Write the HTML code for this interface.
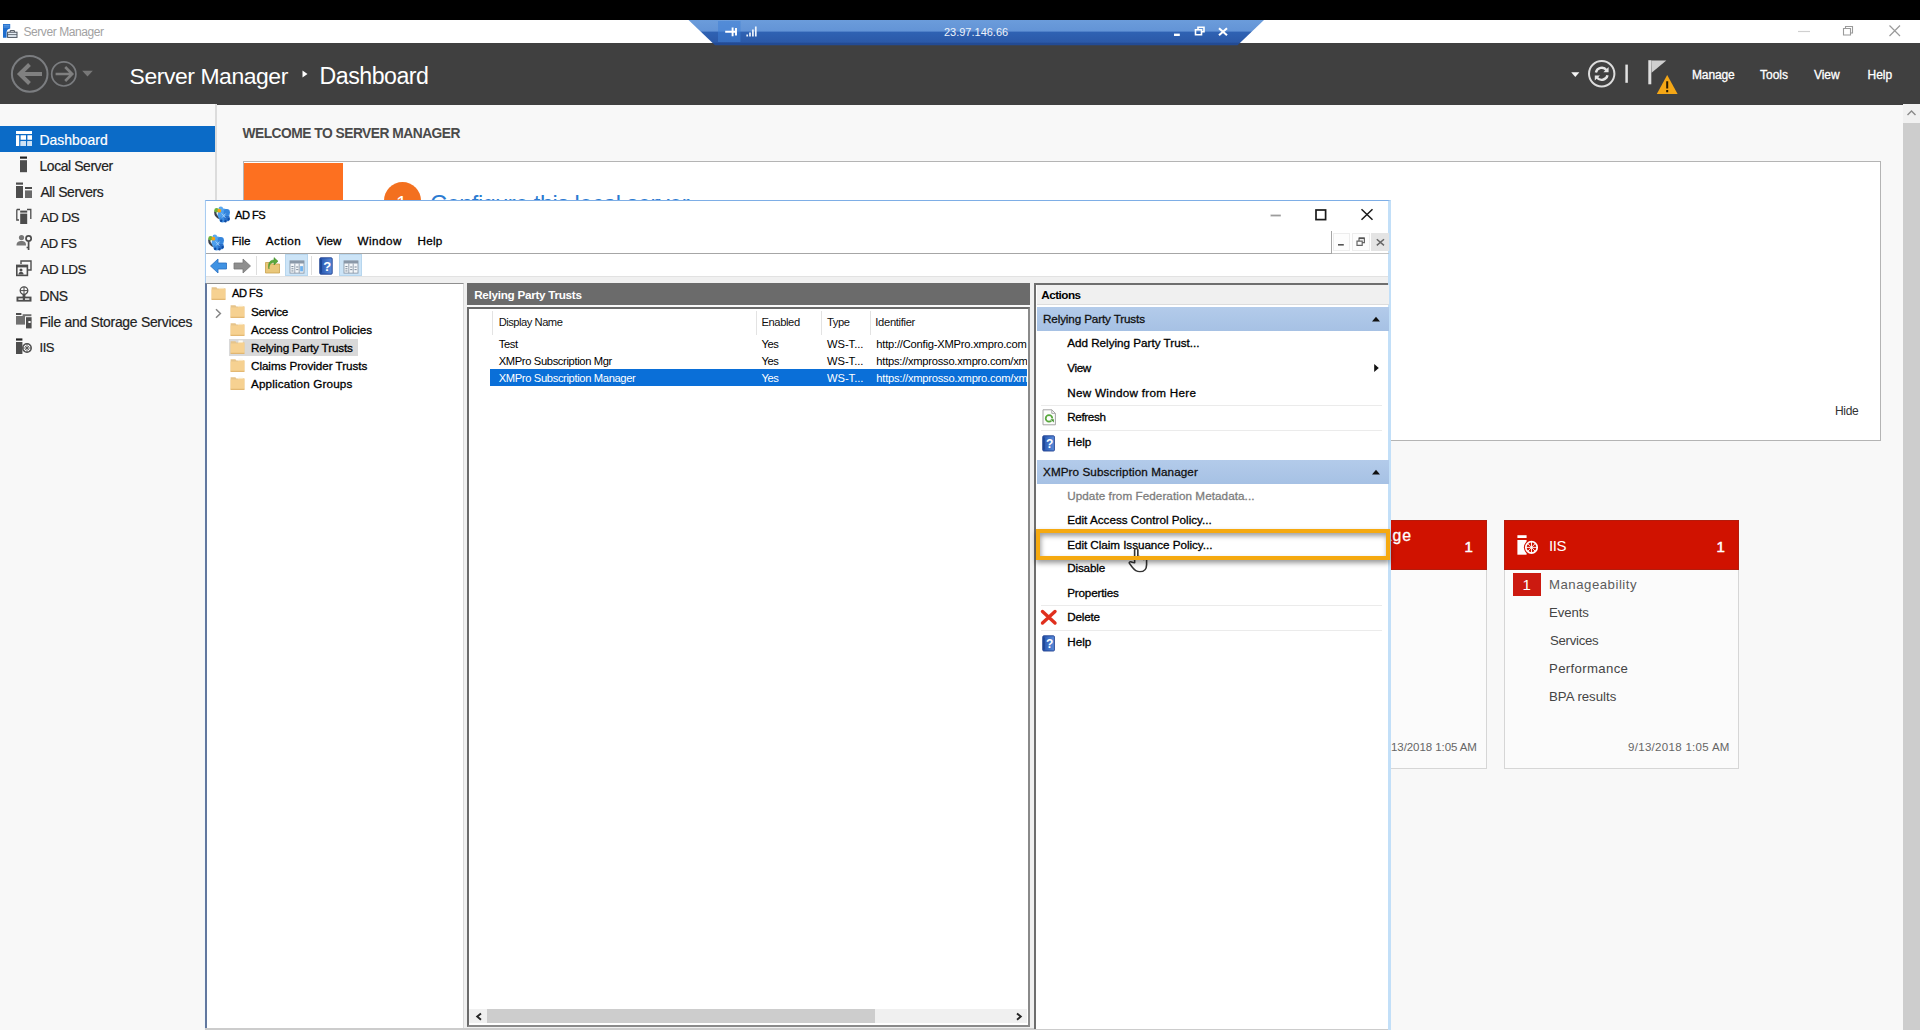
<!DOCTYPE html>
<html lang="en"><head><meta charset="utf-8"><title>Server Manager</title>
<style>
html,body{margin:0;padding:0;}
body{width:1920px;height:1030px;overflow:hidden;background:#f8f8f8;font-family:"Liberation Sans",sans-serif;}
#root{position:relative;width:1920px;height:1030px;overflow:hidden;}
#root div,#root span,#root svg{position:absolute;}
#root span{white-space:pre;line-height:20px;height:20px;}
</style></head><body><div id="root">
<div style="left:0px;top:0px;width:1920px;height:20px;background:#000;"></div>
<div style="left:0px;top:19.8px;width:1920px;height:23px;background:#fff;"></div>
<svg style="left:2.5px;top:24px;" width="15" height="14" viewBox="0 0 15 14"><path d="M0 0H7.2V4.4C5 4.8 3.6 6.2 3.6 8.2V13.7H0Z" fill="#1f6dcd"/><path d="M0.6 1.3H6.6M0.6 3H6.6" stroke="#7db2ee" stroke-width="0.7"/>
<rect x="4.6" y="8.2" width="9.4" height="5.2" fill="#e6edf5" stroke="#4d5560" stroke-width="1"/><path d="M7.2 8V6.6H11.4V8" stroke="#4d5560" stroke-width="1" fill="none"/><path d="M4.6 10.6H14" stroke="#4d5560" stroke-width="0.8"/></svg>
<span style="left:23.40px;top:21.74px;font-size:12px;color:#a2a2a2;letter-spacing:-0.419px;">Server Manager</span>
<svg style="left:1796px;top:24px;" width="16" height="14" viewBox="0 0 16 14"><path d="M2 7.5H14" stroke="#d0d0d0" stroke-width="1.2"/></svg>
<svg style="left:1839px;top:21.5px;" width="16" height="16" viewBox="0 0 16 16"><path d="M4.5 6.5H11.5V13H4.5Z M6.5 6.5V4.5H13.5V11H11.5" fill="none" stroke="#9a9a9a" stroke-width="1.1"/></svg>
<svg style="left:1887px;top:23px;" width="16" height="16" viewBox="0 0 16 16"><path d="M2.5 2.5L13 13M13 2.5L2.5 13" stroke="#9a9a9a" stroke-width="1.2" fill="none"/></svg>
<div style="left:0px;top:42.5px;width:1920px;height:62px;background:#404040;"></div>
<svg style="left:686px;top:19.8px;" width="580" height="26" viewBox="0 0 580 26"><defs><linearGradient id="rg" x1="0" y1="0" x2="0" y2="1"><stop offset="0" stop-color="#6b9cdb"/><stop offset="0.44" stop-color="#6394d6"/><stop offset="0.48" stop-color="#2f62b3"/><stop offset="0.88" stop-color="#2b59a8"/><stop offset="0.92" stop-color="#234b94"/><stop offset="1" stop-color="#234b94"/></linearGradient></defs>
<polygon points="2.5,0 578,0 551.5,25.2 29,25.2" fill="url(#rg)"/>
<rect x="32" y="1" width="22.5" height="21" fill="#3f7fd6" opacity="0.55"/>
<path d="M39.2 11.8H50.6M46.6 7.4V16.2M50 8V15.6" stroke="#fff" stroke-width="1.9" fill="none"/>
<path d="M61.2 16.4V14.4M64 16.4V12.4M66.9 16.4V9.6M69.8 16.4V6.6" stroke="#edf3fc" stroke-width="1.7" fill="none"/>
<path d="M488 14.8H493.8" stroke="#fff" stroke-width="2.4"/>
<path d="M509.5 9.8H515.5V14.8H509.5Z M512 9.4V7.2H518V11.8H516" fill="none" stroke="#fff" stroke-width="1.6"/>
<path d="M533 8.2L541 15.2M541 8.2L533 15.2" stroke="#fff" stroke-width="2.1" fill="none"/></svg>
<span style="left:944.00px;top:22.19px;font-size:11px;color:#eef3fb;letter-spacing:-0.010px;">23.97.146.66</span>
<svg style="left:8px;top:53px;" width="90" height="42" viewBox="0 0 90 42"><circle cx="21.7" cy="20.9" r="17.8" fill="none" stroke="#7b7d80" stroke-width="2"/>
<path d="M34 21H13M21.5 11.5L11.8 21L21.5 30.5" fill="none" stroke="#808080" stroke-width="4"/>
<circle cx="55.8" cy="20.9" r="12.1" fill="none" stroke="#7b7d80" stroke-width="1.7"/>
<path d="M47.6 21H63M57.2 14L64.2 21L57.2 28" fill="none" stroke="#808080" stroke-width="2.6"/>
<path d="M74.2 17.8H84.8L79.5 23.6Z" fill="#787878"/></svg>
<span style="left:129.52px;top:65.85px;font-size:22.93px;color:#fff;letter-spacing:-0.429px;">Server Manager</span>
<svg style="left:300px;top:68px;" width="10" height="12" viewBox="0 0 10 12"><path d="M2.5 2.5L7.5 6L2.5 9.5Z" fill="#fff"/></svg>
<span style="left:319.51px;top:65.77px;font-size:23.17px;color:#fff;letter-spacing:-0.475px;">Dashboard</span>
<svg style="left:1568px;top:58px;" width="112" height="38" viewBox="0 0 112 38"><path d="M3.2 14.2H11.4L7.3 19Z" fill="#f4f4f4"/>
<circle cx="33.7" cy="15.8" r="12.7" fill="none" stroke="#dcdcdc" stroke-width="2"/>
<path d="M27.9 14.4A6 6 0 0 1 38.6 12.2M39.5 17.2A6 6 0 0 1 28.8 19.4" fill="none" stroke="#e4e4e4" stroke-width="2.4"/>
<path d="M40.6 9V14.2H35.4Z M26.8 22.6V17.4H32Z" fill="#e4e4e4"/>
<path d="M58.6 6.6V24.8" stroke="#e2e2e2" stroke-width="2.5"/>
<path d="M81.8 2.2V26.3" stroke="#dedede" stroke-width="3"/>
<path d="M83.3 2.4H98.3L83.6 14.8Z" fill="#cfcfcf"/>
<path d="M99.2 17L109.6 36H88.8Z" fill="#f5a716"/>
<path d="M99.2 23.2V30.4M99.2 32V34.2" stroke="#2a1a00" stroke-width="2"/></svg>
<span style="left:1692.00px;top:64.54px;font-size:12px;color:#fff;letter-spacing:-0.138px;-webkit-text-stroke:0.3px currentColor;">Manage</span>
<span style="left:1760.00px;top:64.54px;font-size:12px;color:#fff;-webkit-text-stroke:0.3px currentColor;">Tools</span>
<span style="left:1814.00px;top:64.54px;font-size:12px;color:#fff;letter-spacing:-0.042px;-webkit-text-stroke:0.3px currentColor;">View</span>
<span style="left:1867.50px;top:64.54px;font-size:12px;color:#fff;-webkit-text-stroke:0.3px currentColor;">Help</span>
<div style="left:0px;top:104px;width:215px;height:926px;background:#f8f8f8;"></div>
<div style="left:215px;top:104px;width:2px;height:926px;background:#dcdcdc;"></div>
<div style="left:0px;top:126px;width:215px;height:26px;background:#0b6bc7;"></div>
<span style="left:39.50px;top:129.68px;font-size:13.9px;color:#fff;letter-spacing:0.034px;-webkit-text-stroke:0.2px currentColor;">Dashboard</span>
<span style="left:39.50px;top:155.68px;font-size:13.9px;color:#222;letter-spacing:-0.396px;-webkit-text-stroke:0.2px currentColor;">Local Server</span>
<span style="left:40.50px;top:181.68px;font-size:13.9px;color:#222;letter-spacing:-0.391px;-webkit-text-stroke:0.2px currentColor;">All Servers</span>
<span style="left:40.50px;top:207.83px;font-size:13.48px;color:#222;letter-spacing:-0.505px;-webkit-text-stroke:0.2px currentColor;">AD DS</span>
<span style="left:40.50px;top:233.97px;font-size:13.07px;color:#222;letter-spacing:-0.501px;-webkit-text-stroke:0.2px currentColor;">AD FS</span>
<span style="left:40.50px;top:259.83px;font-size:13.48px;color:#222;letter-spacing:-0.543px;-webkit-text-stroke:0.2px currentColor;">AD LDS</span>
<span style="left:39.50px;top:285.68px;font-size:13.9px;color:#222;letter-spacing:-0.381px;-webkit-text-stroke:0.2px currentColor;">DNS</span>
<span style="left:39.50px;top:311.68px;font-size:13.9px;color:#222;letter-spacing:-0.259px;-webkit-text-stroke:0.2px currentColor;">File and Storage Services</span>
<span style="left:39.56px;top:337.97px;font-size:13.07px;color:#222;letter-spacing:-0.488px;-webkit-text-stroke:0.2px currentColor;">IIS</span>
<svg style="left:16px;top:131px;" width="16" height="16" viewBox="0 0 16 16"><path d="M0 0H16V3H0Z M0 4.2H3.2V15H0Z M4.6 4.2H10V8.8H4.6Z M11.4 4.2H16V8.8H11.4Z M4.6 10.2H10V15H4.6Z M11.4 10.2H16V15H11.4Z" fill="#fff"/><path d="M4.6 10.2H10V15H4.6Z M11.4 10.2H16V15H11.4Z" fill="#cfe2f5"/></svg>
<svg style="left:16px;top:156px;" width="16" height="17" viewBox="0 0 16 17"><rect x="4" y="0.5" width="7" height="2.2" fill="#222"/><rect x="4" y="4.2" width="7" height="12" fill="#4d4d4d"/></svg>
<svg style="left:16px;top:182px;" width="16" height="17" viewBox="0 0 16 17"><rect x="0" y="0.5" width="7" height="2.2" fill="#4d4d4d"/><rect x="0" y="4" width="7" height="12" fill="#4d4d4d"/><rect x="9" y="5" width="7" height="2" fill="#4d4d4d"/><rect x="9" y="8.4" width="7" height="7.6" fill="#6a6a6a"/></svg>
<svg style="left:16px;top:208px;" width="16" height="17" viewBox="0 0 16 17"><path d="M0.8 1.5H4M11 1.5H14.8V11M0.8 1.5V12H3" fill="none" stroke="#4d4d4d" stroke-width="1.3"/><rect x="4.2" y="2.6" width="7" height="2" fill="#4d4d4d"/><rect x="4.2" y="5.6" width="7" height="10.4" fill="#4d4d4d"/></svg>
<svg style="left:16px;top:234px;" width="17" height="17" viewBox="0 0 17 17"><circle cx="5.5" cy="3.6" r="2.6" fill="#777"/><path d="M0.5 11.5C0.5 8 2.5 7 5.5 7S10 8 10 11.5Z" fill="#777"/><circle cx="12.6" cy="4.4" r="2.6" fill="none" stroke="#4d4d4d" stroke-width="1.7"/><path d="M12.6 7V16M12.6 13.5H10.6" stroke="#4d4d4d" stroke-width="1.7" fill="none"/></svg>
<svg style="left:16px;top:260px;" width="16" height="17" viewBox="0 0 16 17"><path d="M5 4V1H15V10H12" fill="none" stroke="#4d4d4d" stroke-width="1.4"/><rect x="0.8" y="5.4" width="10.6" height="10" fill="none" stroke="#4d4d4d" stroke-width="1.6"/><rect x="0.8" y="5" width="10.6" height="2.4" fill="#4d4d4d"/><circle cx="5" cy="10" r="1.5" fill="#4d4d4d"/><path d="M2.5 14.6C2.5 12.4 3.6 12 5 12S7.6 12.4 7.6 14.6Z" fill="#4d4d4d"/></svg>
<svg style="left:16px;top:286px;" width="16" height="17" viewBox="0 0 16 17"><circle cx="8" cy="4.6" r="3.8" fill="none" stroke="#4d4d4d" stroke-width="1.3"/><path d="M4.2 4.6H11.8M8 0.8V8.4" stroke="#4d4d4d" stroke-width="1"/><rect x="6.6" y="8" width="2.8" height="3" fill="#4d4d4d"/><rect x="0.5" y="10.6" width="15" height="5" fill="#4d4d4d"/><rect x="2.4" y="12.4" width="4.4" height="1.4" fill="#f8f8f8"/><rect x="9" y="12.4" width="4.4" height="1.4" fill="#f8f8f8"/></svg>
<svg style="left:16px;top:312px;" width="16" height="17" viewBox="0 0 16 17"><path d="M0 1H5.4V3H0Z" fill="#4d4d4d"/><path d="M0 4H9V12.6H0Z" fill="#707070"/><path d="M6.6 2.2H15.4V4.2H6.6Z" fill="#707070"/><path d="M10 5.2H15.6V16.4H10Z" fill="#4d4d4d"/><rect x="12.4" y="9" width="2.2" height="2" fill="#f8f8f8"/></svg>
<svg style="left:16px;top:338px;" width="16" height="17" viewBox="0 0 16 17"><rect x="0" y="0.4" width="6.4" height="2.2" fill="#222"/><rect x="0" y="4" width="6.4" height="12" fill="#4d4d4d"/><circle cx="11" cy="10" r="4.2" fill="none" stroke="#4d4d4d" stroke-width="1.5"/><path d="M7 10H15M11 6V14M8.4 7.4L13.6 12.6M13.6 7.4L8.4 12.6" stroke="#4d4d4d" stroke-width="0.8"/></svg>
<svg style="left:202.5px;top:316px;" width="8" height="10" viewBox="0 0 8 10"><path d="M2 0.5L6.5 5L2 9.5Z" fill="#222"/></svg>
<span style="left:242.50px;top:123.62px;font-size:13.8px;color:#4a4a4a;font-weight:700;letter-spacing:-0.511px;">WELCOME TO SERVER MANAGER</span>
<div style="left:243px;top:161px;width:1638px;height:279.5px;background:#fff;border:1px solid #b4b4b4;box-sizing:border-box;"></div>
<div style="left:243.8px;top:163.2px;width:99.2px;height:121px;background:#fd7020;"></div>
<div style="left:383.5px;top:181.5px;width:37px;height:37px;background:#f3701f;border-radius:50%;"></div>
<span style="left:396.00px;top:193.07px;font-size:20px;color:#fff;">1</span>
<span style="left:430.09px;top:193.80px;font-size:23.66px;color:#2b7bd1;letter-spacing:-0.536px;">Configure this local server</span>
<span style="left:1835.00px;top:401.34px;font-size:12px;color:#333;letter-spacing:-0.335px;">Hide</span>
<div style="left:1903px;top:104px;width:17px;height:926px;background:#f1f1f1;"></div>
<div style="left:1903px;top:122.5px;width:17px;height:908px;background:#cdcdcd;"></div>
<svg style="left:1905px;top:108px;" width="13" height="10" viewBox="0 0 13 10"><path d="M2.5 7L6.5 3L10.5 7" fill="none" stroke="#8a8a8a" stroke-width="1.4"/></svg>
<div style="left:1252px;top:520px;width:234.5px;height:249px;background:#fbfbfb;border:1px solid #d6d6d6;box-sizing:border-box;"></div>
<div style="left:1252px;top:520px;width:234.5px;height:49.5px;background:#d01200;border:1px solid #b41c0c;box-sizing:border-box;"></div>
<div style="left:1504px;top:520px;width:234.5px;height:249px;background:#fbfbfb;border:1px solid #d6d6d6;box-sizing:border-box;"></div>
<div style="left:1504px;top:520px;width:234.5px;height:49.5px;background:#d01200;border:1px solid #b41c0c;box-sizing:border-box;"></div>
<span style="left:1382.60px;top:525.53px;font-size:15.8px;color:#fff;letter-spacing:1.065px;-webkit-text-stroke:0.3px currentColor;">age</span>
<span style="left:1464.40px;top:536.60px;font-size:15px;color:#fff;-webkit-text-stroke:0.5px currentColor;">1</span>
<span style="left:1391.00px;top:737.02px;font-size:11.5px;color:#666;letter-spacing:-0.072px;">13/2018 1:05 AM</span>
<svg style="left:1517px;top:535px;" width="24" height="22" viewBox="0 0 24 22"><rect x="0.4" y="0.2" width="9.2" height="2.8" fill="#fff"/><rect x="0.4" y="5" width="9.2" height="14.7" fill="#fff"/><circle cx="14.5" cy="12.4" r="7.6" fill="#d01200"/><circle cx="14.5" cy="12.4" r="5.7" fill="none" stroke="#fff" stroke-width="1.7"/><path d="M9 12.4H20M14.5 7V18M10.8 8.6L18.2 16.2M18.2 8.6L10.8 16.2" stroke="#fff" stroke-width="0.9"/></svg>
<span style="left:1549.00px;top:536.30px;font-size:15px;color:#fff;letter-spacing:-0.417px;">IIS</span>
<span style="left:1716.40px;top:536.60px;font-size:15px;color:#fff;-webkit-text-stroke:0.5px currentColor;">1</span>
<div style="left:1513px;top:573px;width:27.5px;height:23px;background:#cc1a10;"></div>
<span style="left:1522.60px;top:574.80px;font-size:15px;color:#fff;">1</span>
<span style="left:1549.00px;top:574.73px;font-size:13.2px;color:#5c5c5c;letter-spacing:0.518px;">Manageability</span>
<span style="left:1549.00px;top:602.73px;font-size:13.2px;color:#444;letter-spacing:-0.104px;">Events</span>
<span style="left:1550.00px;top:630.73px;font-size:13.2px;color:#444;letter-spacing:-0.282px;">Services</span>
<span style="left:1549.00px;top:658.73px;font-size:13.2px;color:#444;letter-spacing:0.344px;">Performance</span>
<span style="left:1549.00px;top:686.73px;font-size:13.2px;color:#444;letter-spacing:0.008px;">BPA results</span>
<span style="left:1628.00px;top:737.02px;font-size:11.5px;color:#666;letter-spacing:0.306px;">9/13/2018 1:05 AM</span>
<div style="left:203.5px;top:199.5px;width:1187.5px;height:832px;background:#f1f7fc;"></div>
<div style="left:204.5px;top:200px;width:1186.5px;height:831px;background:#fff;border:1.6px solid #a9ccf0;border-top-color:#7eaee6;border-right:3px solid #c2dff8;box-sizing:border-box;"></div>
<svg style="left:214px;top:206px;" width="17" height="17" viewBox="0 0 17 17"><path d="M1.3 5.4C1 8.6 3 11.2 6.2 12.2" stroke="#3b404a" stroke-width="2.2" fill="none"/>
<circle cx="9.6" cy="8.6" r="6" fill="#4ea0ee"/><circle cx="6.8" cy="2.8" r="2.3" fill="#5aa8f0"/><circle cx="12.8" cy="6.2" r="3.1" fill="#3585dc"/><circle cx="8.4" cy="13.4" r="3" fill="#3a8be0"/><circle cx="13" cy="12.4" r="2.9" fill="#2a6fc8"/>
<circle cx="2.6" cy="4.2" r="2.3" fill="#6cb33e"/><circle cx="5.3" cy="4.7" r="1.9" fill="#f5a313"/>
<path d="M7.6 7.4L11.4 11.8M11.6 7.6L8 11.6" stroke="#a8d0f7" stroke-width="0.9"/><circle cx="7.2" cy="14.8" r="1.2" fill="#0f4aa0"/><circle cx="11.4" cy="15.2" r="1.2" fill="#0f4aa0"/><circle cx="14.6" cy="13.2" r="1.1" fill="#0f4aa0"/></svg>
<span style="left:235.00px;top:205.15px;font-size:11.11px;color:#000;letter-spacing:-0.523px;-webkit-text-stroke:0.3px currentColor;">AD FS</span>
<svg style="left:1268px;top:207px;" width="108" height="16" viewBox="0 0 108 16"><path d="M2.6 8.5H12.8" stroke="#9c9c9c" stroke-width="1.8"/>
<rect x="48" y="3" width="9.6" height="9.6" fill="none" stroke="#1a1a1a" stroke-width="1.7"/>
<path d="M93.5 2.2L104.5 12.8M104.5 2.2L93.5 12.8" stroke="#1a1a1a" stroke-width="1.5" fill="none"/></svg>
<svg style="left:208px;top:234px;" width="17" height="17" viewBox="0 0 17 17"><path d="M1.3 5.4C1 8.6 3 11.2 6.2 12.2" stroke="#3b404a" stroke-width="2.2" fill="none"/>
<circle cx="9.6" cy="8.6" r="6" fill="#4ea0ee"/><circle cx="6.8" cy="2.8" r="2.3" fill="#5aa8f0"/><circle cx="12.8" cy="6.2" r="3.1" fill="#3585dc"/><circle cx="8.4" cy="13.4" r="3" fill="#3a8be0"/><circle cx="13" cy="12.4" r="2.9" fill="#2a6fc8"/>
<circle cx="2.6" cy="4.2" r="2.3" fill="#6cb33e"/><circle cx="5.3" cy="4.7" r="1.9" fill="#f5a313"/>
<path d="M7.6 7.4L11.4 11.8M11.6 7.6L8 11.6" stroke="#a8d0f7" stroke-width="0.9"/><circle cx="7.2" cy="14.8" r="1.2" fill="#0f4aa0"/><circle cx="11.4" cy="15.2" r="1.2" fill="#0f4aa0"/><circle cx="14.6" cy="13.2" r="1.1" fill="#0f4aa0"/></svg>
<span style="left:231.70px;top:231.05px;font-size:11.7px;color:#000;letter-spacing:-0.011px;-webkit-text-stroke:0.3px currentColor;">File</span>
<span style="left:265.80px;top:231.05px;font-size:11.7px;color:#000;letter-spacing:0.503px;-webkit-text-stroke:0.3px currentColor;">Action</span>
<span style="left:316.30px;top:231.05px;font-size:11.7px;color:#000;letter-spacing:0.006px;-webkit-text-stroke:0.3px currentColor;">View</span>
<span style="left:357.50px;top:231.05px;font-size:11.7px;color:#000;letter-spacing:0.474px;-webkit-text-stroke:0.3px currentColor;">Window</span>
<span style="left:417.50px;top:231.05px;font-size:11.7px;color:#000;letter-spacing:0.254px;-webkit-text-stroke:0.3px currentColor;">Help</span>
<div style="left:206px;top:253px;width:1125.5px;height:1.2px;background:#a6a6a6;"></div>
<div style="left:1331.5px;top:253px;width:57.5px;height:1.2px;background:#c4c4c4;"></div>
<div style="left:1330.5px;top:230.5px;width:1.4px;height:23.5px;background:#a6a6a6;"></div>
<div style="left:1332.5px;top:233px;width:17.5px;height:17.5px;background:#fdfdfd;border:1px solid #ededed;box-sizing:border-box;"></div>
<div style="left:1352px;top:233px;width:17.5px;height:17.5px;background:#fdfdfd;border:1px solid #ededed;box-sizing:border-box;"></div>
<div style="left:1371px;top:233px;width:17.5px;height:17.5px;background:#e4e4e4;"></div>
<svg style="left:1332px;top:233px;" width="58" height="18" viewBox="0 0 58 18"><path d="M6 11.8H11.8" stroke="#555" stroke-width="1.6"/>
<path d="M25 8.2H30.2V12.4H25Z M27 8V5H32.4V9.6H30.4" fill="none" stroke="#666" stroke-width="1.2"/><path d="M27 5.3H32.4" stroke="#555" stroke-width="1.6"/>
<path d="M44.8 6.2L52 12.4M52 6.2L44.8 12.4" stroke="#666" stroke-width="1.5" fill="none"/></svg>
<div style="left:285px;top:254px;width:23px;height:22px;background:#cce4f7;border:1px solid #b7d6ee;box-sizing:border-box;"></div>
<div style="left:338.5px;top:254px;width:23px;height:22px;background:#cce4f7;border:1px solid #b7d6ee;box-sizing:border-box;"></div>
<div style="left:255.5px;top:256px;width:1px;height:19px;background:#dedede;"></div>
<div style="left:310.5px;top:256px;width:1px;height:19px;background:#dedede;"></div>
<svg style="left:209px;top:257px;" width="44" height="18" viewBox="0 0 44 18"><path d="M1.5 9L9 2V6H17.5V12H9V16Z" fill="#3f92e3" stroke="#2a6fc0" stroke-width="0.8"/>
<path d="M41.5 9L34 2V6H25V12H34V16Z" fill="#8e8e8e" stroke="#777" stroke-width="0.8"/></svg>
<svg style="left:264px;top:257px;" width="18" height="18" viewBox="0 0 18 18"><path d="M1.5 5.5H6L7.5 7H15.5V16H1.5Z" fill="#e9c77a" stroke="#c9a24e" stroke-width="0.8"/>
<path d="M5 12C5 7.5 7 5.5 10 5.5V8L14 4.2L10 0.6V3C5.5 3 3.6 7 5 12Z" fill="#5aa83c" stroke="#3f8a27" stroke-width="0.5"/></svg>
<svg style="left:288px;top:259.5px;" width="18" height="14" viewBox="0 0 18 16"><rect x="1" y="1" width="16" height="14" fill="#f4f7fa" stroke="#8a98a8" stroke-width="1"/><rect x="1" y="1" width="16" height="3" fill="#8a98a8"/>
<path d="M6.5 4V15M11.5 4V15" stroke="#8a98a8" stroke-width="1"/><path d="M2.6 7.5H5M2.6 10H5M2.6 12.5H5M8 8H10.5M8 11H10.5" stroke="#6a7a8c" stroke-width="1"/><rect x="12.6" y="7" width="3.2" height="6" fill="#6fb2ee"/></svg>
<svg style="left:319px;top:257px;" width="14" height="18" viewBox="0 0 14 18"><defs><linearGradient id="hg1" x1="0" y1="0" x2="1" y2="0"><stop offset="0" stop-color="#2453ad"/><stop offset="1" stop-color="#5b8ddb"/></linearGradient></defs><rect x="0.8" y="0.8" width="12.4" height="16.4" rx="1" fill="url(#hg1)" stroke="#1f3f8f" stroke-width="0.9"/><path d="M0.8 2.4H3V15.6H0.8Z" fill="#1c4796"/></svg>
<span style="left:323.20px;top:256.50px;font-size:13px;color:#fff;font-weight:700;">?</span>
<svg style="left:341.5px;top:259.5px;" width="18" height="14" viewBox="0 0 18 16"><rect x="1" y="1" width="16" height="14" fill="#f4f7fa" stroke="#8a98a8" stroke-width="1"/><rect x="1" y="1" width="16" height="3" fill="#8a98a8"/>
<path d="M6.5 4V15M11.5 4V15" stroke="#8a98a8" stroke-width="1"/><path d="M2.6 7.5H5M2.6 10H5M2.6 12.5H5M8 8H10.5M8 11H10.5M13 8H15.5M13 11H15.5" stroke="#6a7a8c" stroke-width="1"/></svg>
<div style="left:206px;top:275.5px;width:1182px;height:755px;background:#f0f0f0;"></div>
<div style="left:206px;top:275.5px;width:1182px;height:1px;background:#e2e2e2;"></div>
<div style="left:205px;top:283px;width:258.5px;height:745.5px;background:#fff;border-top:1.3px solid #8f8f8f;border-left:2px solid #62789f;border-right:1px solid #dadada;box-sizing:border-box;"></div>
<div style="left:205px;top:1028px;width:1183px;height:2px;background:#cccccc;"></div>
<div style="left:228.5px;top:339.4px;width:129.5px;height:16.8px;background:#d9d9d9;"></div>
<svg style="left:211px;top:286.2px;" width="16" height="15" viewBox="0 0 16 15"><path d="M0.6 1.2H5.4L6.4 2.6H14.4V13.6H0.6Z" fill="#e6c48a"/><path d="M8.4 0.4H12.8V4H8.4Z" fill="#fdfaf2"/><path d="M0.6 3.4H7.6L8.8 2.4H14.4V13.6H0.6Z" fill="#f6d191"/><path d="M0.6 12.8H14.4V13.8H0.6Z" fill="#dfb066"/></svg>
<span style="left:232.00px;top:283.15px;font-size:11.11px;color:#000;letter-spacing:-0.473px;-webkit-text-stroke:0.3px currentColor;">AD FS</span>
<svg style="left:230.4px;top:304.2px;" width="16" height="15" viewBox="0 0 16 15"><path d="M0.6 1.2H5.4L6.4 2.6H14.4V13.6H0.6Z" fill="#e6c48a"/><path d="M8.4 0.4H12.8V4H8.4Z" fill="#fdfaf2"/><path d="M0.6 3.4H7.6L8.8 2.4H14.4V13.6H0.6Z" fill="#f6d191"/><path d="M0.6 12.8H14.4V13.8H0.6Z" fill="#dfb066"/></svg>
<span style="left:251.00px;top:301.95px;font-size:11.7px;color:#000;letter-spacing:-0.279px;-webkit-text-stroke:0.3px currentColor;">Service</span>
<svg style="left:230.4px;top:322.2px;" width="16" height="15" viewBox="0 0 16 15"><path d="M0.6 1.2H5.4L6.4 2.6H14.4V13.6H0.6Z" fill="#e6c48a"/><path d="M8.4 0.4H12.8V4H8.4Z" fill="#fdfaf2"/><path d="M0.6 3.4H7.6L8.8 2.4H14.4V13.6H0.6Z" fill="#f6d191"/><path d="M0.6 12.8H14.4V13.8H0.6Z" fill="#dfb066"/></svg>
<span style="left:251.00px;top:319.95px;font-size:11.7px;color:#000;letter-spacing:-0.044px;-webkit-text-stroke:0.3px currentColor;">Access Control Policies</span>
<svg style="left:230.4px;top:340.2px;" width="16" height="15" viewBox="0 0 16 15"><path d="M0.6 1.2H5.4L6.4 2.6H14.4V13.6H0.6Z" fill="#e6c48a"/><path d="M8.4 0.4H12.8V4H8.4Z" fill="#fdfaf2"/><path d="M0.6 3.4H7.6L8.8 2.4H14.4V13.6H0.6Z" fill="#f6d191"/><path d="M0.6 12.8H14.4V13.8H0.6Z" fill="#dfb066"/></svg>
<span style="left:251.00px;top:337.95px;font-size:11.7px;color:#000;letter-spacing:-0.139px;-webkit-text-stroke:0.3px currentColor;">Relying Party Trusts</span>
<svg style="left:230.4px;top:358.2px;" width="16" height="15" viewBox="0 0 16 15"><path d="M0.6 1.2H5.4L6.4 2.6H14.4V13.6H0.6Z" fill="#e6c48a"/><path d="M8.4 0.4H12.8V4H8.4Z" fill="#fdfaf2"/><path d="M0.6 3.4H7.6L8.8 2.4H14.4V13.6H0.6Z" fill="#f6d191"/><path d="M0.6 12.8H14.4V13.8H0.6Z" fill="#dfb066"/></svg>
<span style="left:251.00px;top:355.95px;font-size:11.7px;color:#000;letter-spacing:-0.063px;-webkit-text-stroke:0.3px currentColor;">Claims Provider Trusts</span>
<svg style="left:230.4px;top:376.2px;" width="16" height="15" viewBox="0 0 16 15"><path d="M0.6 1.2H5.4L6.4 2.6H14.4V13.6H0.6Z" fill="#e6c48a"/><path d="M8.4 0.4H12.8V4H8.4Z" fill="#fdfaf2"/><path d="M0.6 3.4H7.6L8.8 2.4H14.4V13.6H0.6Z" fill="#f6d191"/><path d="M0.6 12.8H14.4V13.8H0.6Z" fill="#dfb066"/></svg>
<span style="left:251.00px;top:373.95px;font-size:11.7px;color:#000;letter-spacing:0.153px;-webkit-text-stroke:0.3px currentColor;">Application Groups</span>
<svg style="left:214px;top:307.8px;" width="8" height="11" viewBox="0 0 8 11"><path d="M2 1.2L6.4 5.5L2 9.8" fill="none" stroke="#868686" stroke-width="1.5"/></svg>
<div style="left:467px;top:283.3px;width:563px;height:21.6px;background:#6b6b6b;"></div>
<span style="left:474.20px;top:285.35px;font-size:11.7px;color:#fff;font-weight:700;letter-spacing:-0.280px;">Relying Party Trusts</span>
<div style="left:467px;top:305px;width:563px;height:2.4px;background:#fafafa;"></div>
<div style="left:467px;top:307.3px;width:563px;height:719.6px;background:#fff;border:2.2px solid #6b6b6b;border-right-color:#8a8a8a;border-bottom-color:#8a8a8a;box-sizing:border-box;"></div>
<div style="left:491.7px;top:311px;width:1px;height:24px;background:#e3e3e3;"></div>
<div style="left:755.5px;top:311px;width:1px;height:24px;background:#e3e3e3;"></div>
<div style="left:821px;top:311px;width:1px;height:24px;background:#e3e3e3;"></div>
<div style="left:870.3px;top:311px;width:1px;height:24px;background:#e3e3e3;"></div>
<span style="left:498.70px;top:312.42px;font-size:11.2px;color:#111;letter-spacing:-0.492px;">Display Name</span>
<span style="left:761.50px;top:312.42px;font-size:11.2px;color:#111;letter-spacing:-0.406px;">Enabled</span>
<span style="left:827.00px;top:312.42px;font-size:11.2px;color:#111;letter-spacing:-0.444px;">Type</span>
<span style="left:875.30px;top:312.42px;font-size:11.2px;color:#111;letter-spacing:-0.320px;">Identifier</span>
<div style="left:490.3px;top:368.8px;width:536.7px;height:17px;background:#0a6fd8;"></div>
<div style="left:470px;top:336px;width:557px;height:60px;overflow:hidden;">
<span style="left:28.70px;top:-2.28px;font-size:11.2px;color:#000;letter-spacing:-0.403px;">Test</span>
<span style="left:291.50px;top:-2.28px;font-size:11.2px;color:#000;letter-spacing:-0.428px;">Yes</span>
<span style="left:357.00px;top:-2.28px;font-size:11.2px;color:#000;letter-spacing:-0.043px;">WS-T...</span>
<span style="left:406.30px;top:-2.28px;font-size:11.2px;color:#000;letter-spacing:-0.220px;">http://Config-XMPro.xmpro.com</span>
<span style="left:28.70px;top:14.82px;font-size:11.2px;color:#000;letter-spacing:-0.362px;">XMPro Subscription Mgr</span>
<span style="left:291.50px;top:14.82px;font-size:11.2px;color:#000;letter-spacing:-0.428px;">Yes</span>
<span style="left:357.00px;top:14.82px;font-size:11.2px;color:#000;letter-spacing:-0.043px;">WS-T...</span>
<span style="left:406.30px;top:14.82px;font-size:11.2px;color:#000;letter-spacing:-0.250px;">https://xmprosso.xmpro.com/xm</span>
<span style="left:28.70px;top:31.92px;font-size:11.2px;color:#fff;letter-spacing:-0.360px;">XMPro Subscription Manager</span>
<span style="left:291.50px;top:31.92px;font-size:11.2px;color:#fff;letter-spacing:-0.428px;">Yes</span>
<span style="left:357.00px;top:31.92px;font-size:11.2px;color:#fff;letter-spacing:-0.043px;">WS-T...</span>
<span style="left:406.30px;top:31.92px;font-size:11.2px;color:#fff;letter-spacing:-0.250px;">https://xmprosso.xmpro.com/xm</span>
</div>
<div style="left:469.2px;top:1009px;width:557.8px;height:14px;background:#f0f0f0;"></div>
<div style="left:487.2px;top:1009px;width:387.5px;height:14px;background:#cdcdcd;"></div>
<svg style="left:475px;top:1011.5px;" width="8" height="10" viewBox="0 0 8 10"><path d="M6 1.4L2.2 4.6L6 7.8" fill="none" stroke="#262626" stroke-width="1.9"/></svg>
<svg style="left:1014.5px;top:1011.5px;" width="8" height="10" viewBox="0 0 8 10"><path d="M2 1.4L5.8 4.6L2 7.8" fill="none" stroke="#262626" stroke-width="1.9"/></svg>
<div style="left:1034.3px;top:283.2px;width:354.2px;height:746px;background:#fff;border-left:2.2px solid #6e6e6e;border-top:2.2px solid #6e6e6e;box-sizing:border-box;"></div>
<div style="left:1036.5px;top:285.4px;width:352px;height:19.6px;background:#f0f0f0;"></div>
<div style="left:1036.5px;top:304px;width:352px;height:1px;background:#dcdcdc;"></div>
<span style="left:1041.20px;top:285.15px;font-size:11.7px;color:#000;font-weight:700;letter-spacing:-0.493px;">Actions</span>
<div style="left:1036.5px;top:306.9px;width:352px;height:24.6px;background:linear-gradient(#b3cbea,#a6c1e4);"></div>
<div style="left:1036.5px;top:460.4px;width:352px;height:23.6px;background:linear-gradient(#b3cbea,#a6c1e4);"></div>
<span style="left:1043.00px;top:309.45px;font-size:11.7px;color:#111;letter-spacing:-0.134px;-webkit-text-stroke:0.3px currentColor;">Relying Party Trusts</span>
<span style="left:1043.00px;top:462.45px;font-size:11.7px;color:#111;letter-spacing:0.085px;-webkit-text-stroke:0.3px currentColor;">XMPro Subscription Manager</span>
<svg style="left:1371px;top:315px;" width="10" height="8" viewBox="0 0 10 8"><path d="M1 6.5H9L5 1.8Z" fill="#111"/></svg>
<svg style="left:1371px;top:468px;" width="10" height="8" viewBox="0 0 10 8"><path d="M1 6.5H9L5 1.8Z" fill="#111"/></svg>
<span style="left:1067.20px;top:332.85px;font-size:11.7px;color:#000;letter-spacing:-0.011px;-webkit-text-stroke:0.3px currentColor;">Add Relying Party Trust...</span>
<span style="left:1067.20px;top:358.15px;font-size:11.7px;color:#000;letter-spacing:-0.360px;-webkit-text-stroke:0.3px currentColor;">View</span>
<span style="left:1067.20px;top:382.55px;font-size:11.7px;color:#000;letter-spacing:0.284px;-webkit-text-stroke:0.3px currentColor;">New Window from Here</span>
<span style="left:1067.20px;top:407.45px;font-size:11.7px;color:#000;letter-spacing:-0.371px;-webkit-text-stroke:0.3px currentColor;">Refresh</span>
<span style="left:1067.20px;top:431.85px;font-size:11.7px;color:#000;letter-spacing:0.021px;-webkit-text-stroke:0.3px currentColor;">Help</span>
<span style="left:1067.20px;top:485.85px;font-size:11.7px;color:#7d7d7d;letter-spacing:0.064px;-webkit-text-stroke:0.3px currentColor;">Update from Federation Metadata...</span>
<span style="left:1067.20px;top:510.35px;font-size:11.7px;color:#000;-webkit-text-stroke:0.3px currentColor;">Edit Access Control Policy...</span>
<span style="left:1067.20px;top:534.85px;font-size:11.7px;color:#000;letter-spacing:-0.048px;-webkit-text-stroke:0.3px currentColor;">Edit Claim Issuance Policy...</span>
<span style="left:1067.20px;top:558.45px;font-size:11.7px;color:#000;letter-spacing:-0.163px;-webkit-text-stroke:0.3px currentColor;">Disable</span>
<span style="left:1067.20px;top:582.55px;font-size:11.7px;color:#000;letter-spacing:-0.180px;-webkit-text-stroke:0.3px currentColor;">Properties</span>
<span style="left:1067.20px;top:607.45px;font-size:11.7px;color:#000;letter-spacing:-0.177px;-webkit-text-stroke:0.3px currentColor;">Delete</span>
<span style="left:1067.20px;top:631.85px;font-size:11.7px;color:#000;letter-spacing:0.021px;-webkit-text-stroke:0.3px currentColor;">Help</span>
<div style="left:1041px;top:405px;width:341px;height:1px;background:#ebebeb;"></div>
<div style="left:1041px;top:430.4px;width:341px;height:1px;background:#ebebeb;"></div>
<div style="left:1041px;top:604.8px;width:341px;height:1px;background:#ebebeb;"></div>
<div style="left:1041px;top:630.4px;width:341px;height:1px;background:#ebebeb;"></div>
<svg style="left:1373px;top:363px;" width="7" height="10" viewBox="0 0 7 10"><path d="M1.2 1L5.8 5L1.2 9Z" fill="#111"/></svg>
<svg style="left:1041.5px;top:409px;" width="15" height="17" viewBox="0 0 15 17"><path d="M1 0.8H9.8L13.4 4.4V15.8H1Z" fill="#fcfcfc" stroke="#a4a4a4" stroke-width="1"/><path d="M9.8 0.8V4.4H13.4" fill="none" stroke="#a4a4a4" stroke-width="0.9"/><circle cx="7" cy="9.4" r="3.3" fill="none" stroke="#58a83c" stroke-width="1.7"/><path d="M7 9.4L11.6 9.4L11.6 13.4Z" fill="#fcfcfc"/><path d="M8.4 10.2H11.8V13.4Z" fill="#3f8f2c"/></svg>
<svg style="left:1042px;top:434.6px;" width="14" height="17" viewBox="0 0 14 17"><rect x="0.8" y="0.8" width="11.6" height="15.2" rx="1" fill="url(#hg1)" stroke="#1f3f8f" stroke-width="0.9"/><path d="M0.8 2.4H2.8V14.6H0.8Z" fill="#1c4796"/></svg>
<span style="left:1046.00px;top:433.64px;font-size:12px;color:#fff;font-weight:700;">?</span>
<svg style="left:1042px;top:634.6px;" width="14" height="17" viewBox="0 0 14 17"><rect x="0.8" y="0.8" width="11.6" height="15.2" rx="1" fill="url(#hg1)" stroke="#1f3f8f" stroke-width="0.9"/><path d="M0.8 2.4H2.8V14.6H0.8Z" fill="#1c4796"/></svg>
<span style="left:1046.00px;top:633.64px;font-size:12px;color:#fff;font-weight:700;">?</span>
<svg style="left:1040px;top:609px;" width="18" height="17" viewBox="0 0 18 17"><path d="M2.5 2.5L15 14M15 2.5L2.5 14" stroke="#e0301e" stroke-width="3.4" stroke-linecap="round" fill="none"/></svg>
<svg style="left:1125.8px;top:547px;" width="27.6" height="27.9" viewBox="0 0 24 30" preserveAspectRatio="none"><path d="M7.5 17V3.2C7.5 1.2 10.3 1.2 10.3 3.2V11.5C10.3 9.8 12.8 9.8 12.9 11.5V12.5C13 10.9 15.4 11 15.5 12.6V13.6C15.6 12.2 17.8 12.3 17.9 13.8V19C17.9 23.5 15.8 26.5 12 26.5C8.6 26.5 7.2 24.6 5.4 21.6L3 17.6C2.2 16.2 4.2 15.2 5.2 16.4Z" fill="#fff" stroke="#333" stroke-width="1.4" stroke-linejoin="round"/></svg>
<div style="left:1035.8px;top:529px;width:354.5px;height:31px;border:4px solid #f5a910;box-sizing:border-box;box-shadow:0 3px 5px rgba(0,0,0,.40), inset 1px 3px 5px rgba(0,0,0,.38);"></div>
</div></body></html>
